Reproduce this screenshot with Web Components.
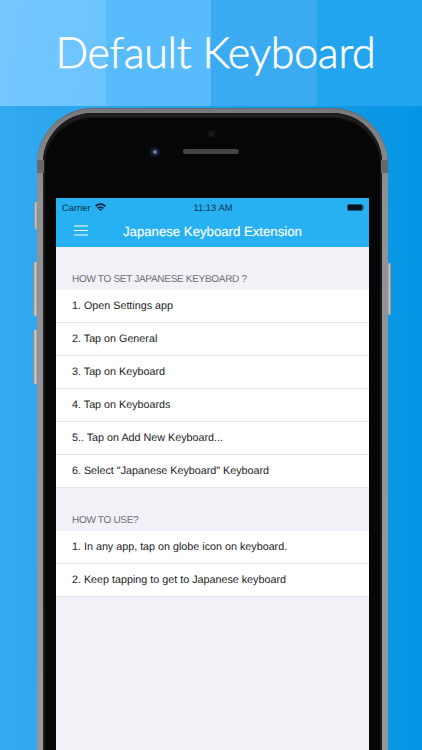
<!DOCTYPE html>
<html>
<head>
<meta charset="utf-8">
<title>Default Keyboard</title>
<style>
	html, body { margin: 0; height: 100%; overflow: hidden; }
	body { font-family: "Liberation Sans", Arial, sans-serif; text-rendering: geometricPrecision; }
</style>
</head>
<body>
<promo-page>
	<phone-frame>
		<status-bar></status-bar>
		<nav-bar>Japanese Keyboard Extension</nav-bar>
		<list-section heading="HOW TO SET JAPANESE KEYBOARD ?">
			<list-row>1. Open Settings app</list-row>
			<list-row>2. Tap on General</list-row>
			<list-row>3. Tap on Keyboard</list-row>
			<list-row>4. Tap on Keyboards</list-row>
			<list-row>5.. Tap on Add New Keyboard...</list-row>
			<list-row>6. Select "Japanese Keyboard" Keyboard</list-row>
		</list-section>
		<list-section heading="HOW TO USE?">
			<list-row>1. In any app, tap on globe icon on keyboard.</list-row>
			<list-row>2. Keep tapping to get to Japanese keyboard</list-row>
		</list-section>
	</phone-frame>
</promo-page>
<script>
class PromoPage extends HTMLElement {
	constructor() {
		super();
		this.attachShadow({ mode: 'open' });
		this.shadowRoot.innerHTML = `
			<style>
				:host {
					display: block;
					width: 422px;
					height: 750px;
					overflow: hidden;
					background: linear-gradient(90deg, #33a9f0 0%, #1f9fea 50%, #0695e5 100%);
				}
				.banner {
					position: relative;
					display: grid;
					grid-template-columns: repeat(4, 1fr);
					height: 106px;
				}
				.banner i:nth-child(1) { background: linear-gradient(100deg, #74c8fe, #6cc3fd); }
				.banner i:nth-child(2) { background: #58bbfb; }
				.banner i:nth-child(3) { background: #3babf1; }
				.banner i:nth-child(4) { background: #22a4ee; }
				h1 {
					position: absolute;
					inset: 0;
					margin: 0;
					display: flex;
					align-items: center;
					justify-content: center;
					padding: 0 0 2px 9px;
					color: #fff;
					font: 300 43px/1 Lato, sans-serif;
					letter-spacing: -0.3px;
					-webkit-text-stroke: 0.6px #fff;
				}
			</style>
			<div class="banner">
				<i></i><i></i><i></i><i></i>
				<h1>Default Keyboard</h1>
			</div>
			<slot></slot>
		`;
	}
}

class PhoneFrame extends HTMLElement {
	constructor() {
		super();
		this.attachShadow({ mode: 'open' });
		this.shadowRoot.innerHTML = `
			<style>
				:host {
					display: block;
					position: relative;
					box-sizing: border-box;
					width: 351px;
					height: 700px;
					margin: 2px 0 0 37px;
					padding: 5px 6px 0;
					border-radius: 56px 56px 0 0;
					background: linear-gradient(180deg, #77797c 0%, #8f9194 12%, #97999c 100%);
					box-shadow: inset 0 1px 0 #66686b;
				}
				.bezel {
					box-sizing: border-box;
					height: 100%;
					padding: 85px 13px 0;
					border-radius: 50px 50px 0 0;
					background: #060606;
					box-shadow: inset 0 0 0 2px #1b1b1c, inset 0 4px 3px #2a2a2c;
				}
				.screen {
					height: 100%;
					background: #f1f1f7;
				}
				.dot, .lens, .speaker, .band, .key { position: absolute; }
				.dot { left: 171px; top: 22px; width: 7px; height: 7px; border-radius: 50%; background: #161618; }
				.lens {
					left: 113px; top: 39px; width: 10px; height: 10px; border-radius: 50%;
					background: radial-gradient(circle at 50% 50%, #8b97c4 0 1px, #23305c 2px, #14161f 4px, #1c1e24 5px);
				}
				.speaker { left: 146px; top: 41px; width: 56px; height: 5px; border-radius: 3px; background: #444446; }
				.band { top: 52px; width: 7px; height: 13px; background: #67696c; }
				.band.l { left: 0; }
				.band.r { right: 0; }
				.key {
					width: 3px;
					border-radius: 2px 0 0 2px;
					background: linear-gradient(90deg, #77797c, #d4d6d8 60%, #8b8d90);
				}
				.k1 { left: -3px; top: 94px; height: 27px; }
				.k2 { left: -4px; top: 154px; height: 54px; width: 4px; }
				.k3 { left: -4px; top: 222px; height: 54px; width: 4px; }
				.k4 { right: -3px; top: 155px; height: 52px; border-radius: 0 2px 2px 0; transform: scaleX(-1); }
			</style>
			<span class="key k1"></span>
			<span class="key k2"></span>
			<span class="key k3"></span>
			<span class="key k4"></span>
			<span class="band l"></span>
			<span class="band r"></span>
			<div class="bezel">
				<span class="dot"></span>
				<span class="lens"></span>
				<span class="speaker"></span>
				<div class="screen"><slot></slot></div>
			</div>
		`;
	}
}

class StatusBar extends HTMLElement {
	constructor() {
		super();
		this.attachShadow({ mode: 'open' });
		this.shadowRoot.innerHTML = `
			<style>
				:host {
					display: grid;
					grid-template-columns: 1fr auto 1fr;
					align-items: center;
					height: 18px;
					padding: 0 5px 0 6px;
					background: #27b1f3;
					color: #0b3550;
					font-size: 9.4px;
				}
				.left { display: flex; align-items: center; gap: 4px; }
				.right { display: flex; justify-content: flex-end; }
				svg { display: block; }
			</style>
			<div class="left">
				<span>Carrier</span>
				<svg width="11" height="8" viewBox="0 0 11 8">
					<path d="M0 2.6A7.6 7.6 0 0 1 11 2.6L9.8 4A5.8 5.8 0 0 0 1.2 4Z" fill="#082a40"/>
					<path d="M2 4.8A4.8 4.8 0 0 1 9 4.8L7.9 6A3.2 3.2 0 0 0 3.1 6Z" fill="#082a40"/>
					<path d="M3.9 6.6A2.2 2.2 0 0 1 7.1 6.6L5.5 8.2Z" fill="#082a40"/>
				</svg>
			</div>
			<span>11:13 AM</span>
			<div class="right">
				<svg width="17" height="7" viewBox="0 0 17 7">
					<rect x=".5" y=".5" width="15" height="6" rx="1.4" fill="#07141d" stroke="#175472"/>
					<rect x="16" y="2.4" width="1" height="2.2" fill="#175472"/>
				</svg>
			</div>
		`;
	}
}

class NavBar extends HTMLElement {
	constructor() {
		super();
		this.attachShadow({ mode: 'open' });
		this.shadowRoot.innerHTML = `
			<style>
				:host {
					display: flex;
					align-items: center;
					height: 31px;
					padding-left: 18px;
					background: #27b1f3;
					color: #fff;
					font-size: 13.2px;
					-webkit-text-stroke: 0.15px #fff;
				}
				svg { display: block; flex: none; margin: -2px 35px 0 0; }
			</style>
			<svg width="14" height="11" viewBox="0 0 14 11">
				<path d="M0 1H14M0 5.5H14M0 10H14" stroke="#fff" stroke-width="1.2"/>
			</svg>
			<slot></slot>
		`;
	}
}

class ListSection extends HTMLElement {
	constructor() {
		super();
		this.attachShadow({ mode: 'open' });
		this.shadowRoot.innerHTML = `
			<style>
				:host { display: block; }
				.title {
					padding: 26px 16px 4px;
					height: 13px;
					line-height: 13px;
					color: #6d6d72;
					font-size: 10px;
					letter-spacing: -0.3px;
				}
				.rows {
					display: flex;
					flex-direction: column;
					background: #fff;
				}
			</style>
			<div class="title"></div>
			<div class="rows"><slot></slot></div>
		`;
		this.shadowRoot.querySelector('.title').textContent = this.getAttribute('heading');
	}
}

class ListRow extends HTMLElement {
	constructor() {
		super();
		this.attachShadow({ mode: 'open' });
		this.shadowRoot.innerHTML = `
			<style>
				:host {
					display: flex;
					align-items: center;
					box-sizing: border-box;
					height: 33px;
					padding: 0 16px;
					background: #fff;
					border-bottom: 1px solid #e3e3e6;
					color: #1c1c1e;
					font-size: 10.76px;
				}
			</style>
			<slot></slot>
		`;
	}
}

customElements.define('promo-page', PromoPage);
customElements.define('phone-frame', PhoneFrame);
customElements.define('status-bar', StatusBar);
customElements.define('nav-bar', NavBar);
customElements.define('list-section', ListSection);
customElements.define('list-row', ListRow);
</script>
</body>
</html>
